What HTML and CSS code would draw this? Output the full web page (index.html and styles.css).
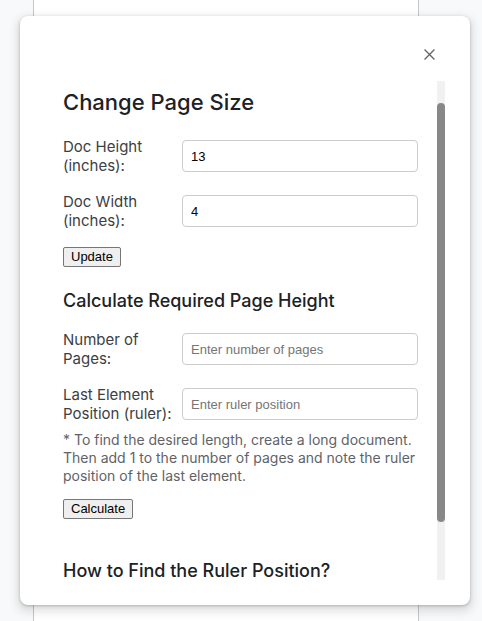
FILE: index.html
```html
<!DOCTYPE html>
<html lang="en">
<head>
<meta charset="utf-8">
<title>Change Page Size</title>
<link rel="stylesheet" href="styles.css">
</head>
<body>
<div class="page"></div>

<div class="dialog">
  <div class="dialog-header">
    <button class="close-btn" aria-label="Close">
      <svg viewBox="0 0 12 12" width="11" height="11" aria-hidden="true">
        <path d="M0.6 0.6 L11.4 11.4 M11.4 0.6 L0.6 11.4" stroke="#5f6368" stroke-width="1.4" fill="none"/>
      </svg>
    </button>
  </div>
  <div class="dialog-body">
    <div class="scroll">
      <div class="content">
        <h1 class="title">Change Page Size</h1>
        <div class="form-row">
          <label class="label" for="h">Doc Height (inches):</label>
          <input class="field" id="h" type="text" value="13">
        </div>
        <div class="form-row">
          <label class="label" for="w">Doc Width (inches):</label>
          <input class="field" id="w" type="text" value="4">
        </div>
        <button class="btn btn-update">Update</button>

        <h2 class="subtitle">Calculate Required Page Height</h2>
        <div class="form-row">
          <label class="label" for="n">Number of Pages:</label>
          <input class="field" id="n" type="text" placeholder="Enter number of pages">
        </div>
        <div class="form-row">
          <label class="label" for="r">Last Element Position (ruler):</label>
          <input class="field" id="r" type="text" placeholder="Enter ruler position">
        </div>
        <p class="note">* To find the desired length, create a long document. Then add 1 to the number of pages and note the ruler position of the last element.</p>
        <button class="btn btn-calc">Calculate</button>

        <h2 class="subtitle subtitle-help">How to Find the Ruler Position?</h2>
      </div>
    </div>
    <div class="scrollbar" aria-hidden="true">
      <div class="scrollbar-thumb"></div>
    </div>
  </div>
</div>
</body>
</html>
```
FILE: styles.css
```css
html, body {
  margin: 0;
  padding: 0;
  height: 100%;
}
body {
  background: #f8f9fa;
  font-family: "Inter", "Roboto", sans-serif;
  overflow: hidden;
}
.page {
  margin-left: 33px;
  width: 384px;
  height: 100vh;
  background: #ffffff;
  border-left: 1px solid #c4c7c5;
  border-right: 1px solid #c4c7c5;
}
.dialog {
  position: absolute;
  left: 20px;
  top: 16px;
  width: 450px;
  height: 589px;
  box-sizing: border-box;
  background: #ffffff;
  border-radius: 8px;
  box-shadow: 0 4px 8px 3px rgba(60, 64, 67, 0.15), 0 1px 3px rgba(60, 64, 67, 0.3);
  display: flex;
  flex-direction: column;
  padding-bottom: 25px;
}
.dialog-header {
  height: 65px;
  flex: 0 0 65px;
  box-sizing: border-box;
  display: flex;
  justify-content: flex-end;
  align-items: flex-start;
  padding: 26px 29px 0 0;
}
.close-btn {
  width: 24px;
  height: 24px;
  padding: 0;
  border: 0;
  background: transparent;
  display: flex;
  align-items: center;
  justify-content: center;
}
.dialog-body {
  flex: 1 1 auto;
  min-height: 0;
  display: flex;
  margin-right: 25px;
}
.scroll {
  flex: 1 1 auto;
  min-width: 0;
  overflow: hidden;
}
.scrollbar {
  flex: 0 0 8px;
  background: #f1f1f1;
  padding-top: 22px;
  box-sizing: border-box;
}
.scrollbar-thumb {
  height: 419px;
  background: #888888;
  border-radius: 4px;
}
.content {
  padding: 7px 19px 0 43px;
}
.title {
  margin: 0 0 21px;
  font-size: 22px;
  line-height: 28px;
  font-weight: 500;
  color: #202124;
}
.form-row {
  display: grid;
  grid-template-columns: 119px 1fr;
  align-items: center;
  margin-bottom: 17px;
}
.label {
  font-size: 15px;
  line-height: 19px;
  color: #3c4043;
  padding-right: 8px;
}
.field {
  height: 32px;
  box-sizing: border-box;
  border: 1px solid #cccccc;
  border-radius: 4px;
  padding: 0 8px;
  font-family: "Liberation Sans", Arial, sans-serif;
  font-size: 13px;
  color: #000000;
  outline: none;
}
.field::placeholder {
  color: #757575;
}
.btn {
  display: block;
  font-family: "Liberation Sans", Arial, sans-serif;
  font-size: 13px;
  line-height: 16px;
  padding: 1px 7px;
  border: 1px solid #767676;
  border-radius: 2px;
  background: #efefef;
  color: #000000;
}
.btn-update {
  margin-top: 2px;
}
.subtitle {
  margin: 22px 0 18px;
  font-size: 18px;
  line-height: 23px;
  font-weight: 500;
  color: #202124;
}
.note {
  margin: -9px 0 14px;
  font-size: 14px;
  line-height: 18px;
  color: #5f6368;
}
.subtitle-help {
  margin-top: 40px;
}
```
